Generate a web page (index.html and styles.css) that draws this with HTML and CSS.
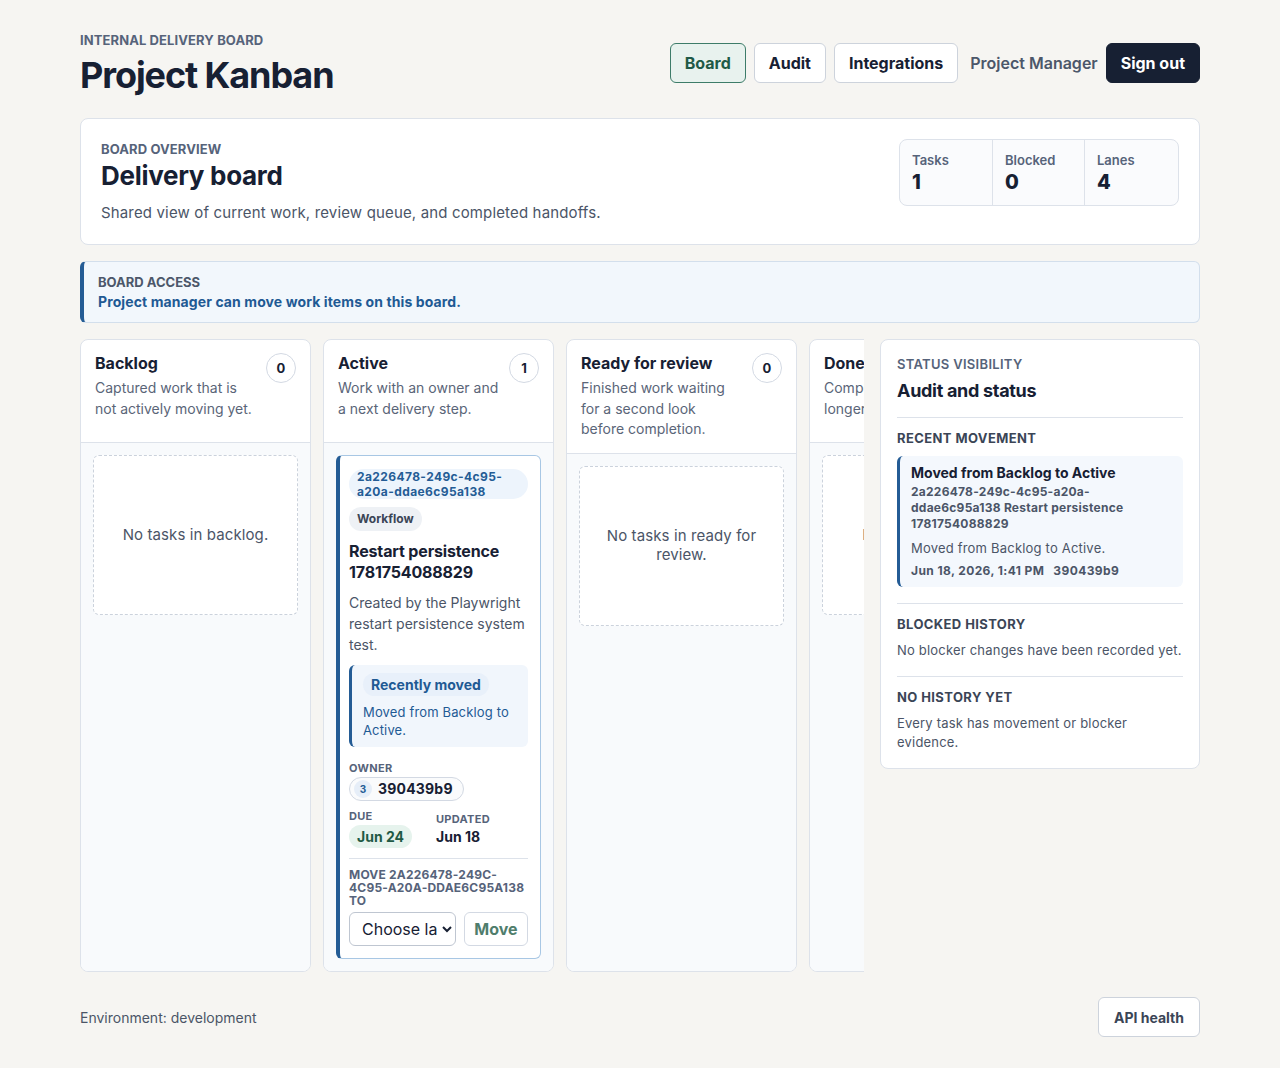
FILE: index.html
```html
<!DOCTYPE html>
<html lang="en">
<head>
<meta charset="utf-8">
<title>Project Kanban</title>
<link rel="stylesheet" href="styles.css">
</head>
<body>
<div class="page">
  <header class="topbar">
    <div class="brand">
      <div class="eyebrow">INTERNAL DELIVERY BOARD</div>
      <h1 class="title">Project Kanban</h1>
    </div>
    <nav class="nav">
      <button class="nav-btn active">Board</button>
      <button class="nav-btn">Audit</button>
      <button class="nav-btn">Integrations</button>
      <span class="role">Project Manager</span>
      <button class="nav-btn dark">Sign out</button>
    </nav>
  </header>

  <section class="overview card">
    <div class="overview-text">
      <div class="eyebrow small">BOARD OVERVIEW</div>
      <h2 class="ov-title">Delivery board</h2>
      <p class="ov-desc">Shared view of current work, review queue, and completed handoffs.</p>
    </div>
    <div class="stats">
      <div class="stat"><div class="stat-label">Tasks</div><div class="stat-value">1</div></div>
      <div class="stat"><div class="stat-label">Blocked</div><div class="stat-value">0</div></div>
      <div class="stat"><div class="stat-label">Lanes</div><div class="stat-value">4</div></div>
    </div>
  </section>

  <section class="access">
    <div class="access-label">BOARD ACCESS</div>
    <div class="access-text">Project manager can move work items on this board.</div>
  </section>

  <div class="workspace">
    <div class="board">
      <div class="lane">
        <div class="lane-head">
          <div class="lane-info">
            <h3 class="lane-title">Backlog</h3>
            <p class="lane-desc">Captured work that is not actively moving yet.</p>
          </div>
          <span class="count">0</span>
        </div>
        <div class="lane-body">
          <div class="empty">No tasks in backlog.</div>
        </div>
      </div>

      <div class="lane">
        <div class="lane-head">
          <div class="lane-info">
            <h3 class="lane-title">Active</h3>
            <p class="lane-desc">Work with an owner and a next delivery step.</p>
          </div>
          <span class="count">1</span>
        </div>
        <div class="lane-body">
          <article class="task">
            <div class="task-id">2a226478-249c-4c95-a20a-ddae6c95a138</div>
            <span class="tag">Workflow</span>
            <h4 class="task-title">Restart persistence 1781754088829</h4>
            <p class="task-desc">Created by the Playwright restart persistence system test.</p>
            <div class="moved">
              <span class="moved-pill">Recently moved</span>
              <p class="moved-text">Moved from Backlog to Active.</p>
            </div>
            <div class="meta-label owner-label">OWNER</div>
            <span class="owner"><span class="avatar">3</span>390439b9</span>
            <div class="dates">
              <div class="date-col">
                <div class="meta-label">DUE</div>
                <span class="due">Jun 24</span>
              </div>
              <div class="date-col">
                <div class="meta-label">UPDATED</div>
                <span class="updated">Jun 18</span>
              </div>
            </div>
            <div class="move">
              <label class="meta-label move-label" for="lane-select">Move 2a226478-249c-4c95-a20a-ddae6c95a138 to</label>
              <div class="move-row">
                <select id="lane-select" class="lane-select">
                  <option>Choose lane</option>
                  <option>Backlog</option>
                  <option>Ready for review</option>
                  <option>Done</option>
                </select>
                <button class="move-btn">Move</button>
              </div>
            </div>
          </article>
        </div>
      </div>

      <div class="lane">
        <div class="lane-head">
          <div class="lane-info">
            <h3 class="lane-title">Ready for review</h3>
            <p class="lane-desc">Finished work waiting for a second look before completion.</p>
          </div>
          <span class="count">0</span>
        </div>
        <div class="lane-body">
          <div class="empty">No tasks in ready for review.</div>
        </div>
      </div>

      <div class="lane">
        <div class="lane-head">
          <div class="lane-info">
            <h3 class="lane-title">Done</h3>
            <p class="lane-desc">Completed work that no longer needs attention.</p>
          </div>
          <span class="count">0</span>
        </div>
        <div class="lane-body">
          <div class="empty">No tasks in done.</div>
        </div>
      </div>
    </div>

    <aside class="side card">
      <div class="side-eyebrow">STATUS VISIBILITY</div>
      <h3 class="side-title">Audit and status</h3>
      <div class="side-section first">
        <div class="side-head">RECENT MOVEMENT</div>
        <div class="event">
          <div class="event-title">Moved from Backlog to Active</div>
          <div class="event-id">2a226478-249c-4c95-a20a-ddae6c95a138 Restart persistence 1781754088829</div>
          <p class="event-text">Moved from Backlog to Active.</p>
          <div class="event-meta"><span>Jun 18, 2026, 1:41 PM</span><span>390439b9</span></div>
        </div>
      </div>
      <div class="side-section">
        <div class="side-head">BLOCKED HISTORY</div>
        <p class="side-text">No blocker changes have been recorded yet.</p>
      </div>
      <div class="side-section">
        <div class="side-head">NO HISTORY YET</div>
        <p class="side-text">Every task has movement or blocker evidence.</p>
      </div>
    </aside>
  </div>

  <footer class="footer">
    <span class="env">Environment: development</span>
    <button class="nav-btn health">API health</button>
  </footer>
</div>
</body>
</html>
```
FILE: styles.css
```css
* { box-sizing: border-box; }
html, body { margin: 0; padding: 0; }
body {
  background: #f6f5f2;
  font-family: Inter, "Noto Sans", "Liberation Sans", sans-serif;
  color: #172033;
}
h1, h2, h3, h4, p { margin: 0; }
button, select { font-family: inherit; }

.page {
  width: 1120px;
  margin: 0 auto;
  padding-top: 32px;
}

.topbar {
  display: flex;
  justify-content: space-between;
  align-items: flex-start;
}
.eyebrow {
  font-size: 13px;
  line-height: 16px;
  font-weight: 700;
  letter-spacing: 0.1px;
  color: #56637a;
}
.title {
  margin-top: 5px;
  font-size: 36px;
  line-height: 44px;
  font-weight: 700;
  letter-spacing: -1.1px;
  color: #172033;
}
.nav {
  margin-top: 11px;
  display: flex;
  align-items: center;
  gap: 8px;
}
.nav-btn {
  height: 40px;
  padding: 0 14px;
  border: 1px solid #cdd3dc;
  border-radius: 6px;
  background: #fff;
  color: #172033;
  font-size: 16px;
  font-weight: 700;
}
.nav-btn.active {
  background: #e8f2ee;
  border-color: #3d7c69;
  color: #1f5a47;
}
.nav-btn.dark {
  background: #172033;
  border-color: #172033;
  color: #fff;
}
.role {
  margin-left: 4px;
  font-size: 16px;
  font-weight: 600;
  color: #4c576a;
}

.card {
  background: #fff;
  border: 1px solid #dde2ea;
  border-radius: 8px;
}

.overview {
  margin-top: 21px;
  padding: 20px;
  display: flex;
  justify-content: space-between;
  align-items: flex-start;
}
.eyebrow.small { line-height: 20px; }
.ov-title {
  margin-top: 1px;
  font-size: 26px;
  line-height: 32px;
  font-weight: 700;
  letter-spacing: -0.3px;
}
.ov-desc {
  margin-top: 9px;
  font-size: 15px;
  line-height: 23px;
  letter-spacing: 0.15px;
  color: #4b5567;
}
.stats {
  display: grid;
  grid-template-columns: 92px 92px 94px;
  border: 1px solid #dde2ea;
  border-radius: 8px;
  background: #fafbfd;
}
.stat {
  padding: 12px 12px 11px;
}
.stat + .stat { border-left: 1px solid #dde2ea; }
.stat-label {
  font-size: 13px;
  line-height: 16px;
  font-weight: 600;
  color: #56637a;
}
.stat-value {
  margin-top: 2px;
  font-size: 20px;
  line-height: 24px;
  font-weight: 800;
}

.access {
  margin-top: 16px;
  padding: 10px 16px 10px 14px;
  background: #f2f7fc;
  border: 1px solid #d3dfec;
  border-left: 4px solid #245c95;
  border-radius: 6px;
  line-height: 20px;
  font-weight: 700;
}
.access-label { font-size: 13px; color: #4c576a; }
.access-text { font-size: 14px; letter-spacing: 0.1px; color: #1f5a94; }

.workspace {
  margin-top: 16px;
  display: grid;
  grid-template-columns: minmax(0, 1fr) 320px;
  gap: 16px;
  align-items: start;
}
.board {
  display: flex;
  gap: 12px;
  overflow: hidden;
}
.lane {
  flex: 0 0 231px;
  display: flex;
  flex-direction: column;
  background: #fff;
  border: 1px solid #dde2ea;
  border-radius: 8px;
  overflow: hidden;
}
.lane-head {
  display: flex;
  justify-content: space-between;
  align-items: flex-start;
  gap: 10px;
  min-height: 103px;
  padding: 12px 14px 13px;
  border-bottom: 1px solid #dde2ea;
}
.lane-title {
  font-size: 16px;
  line-height: 22px;
  font-weight: 700;
}
.lane-desc {
  margin-top: 4px;
  font-size: 14px;
  line-height: 20.5px;
  color: #5a6578;
}
.count {
  flex: 0 0 30px;
  width: 30px;
  height: 30px;
  margin-top: 1px;
  border: 1px solid #d3d9e3;
  border-radius: 50%;
  display: flex;
  align-items: center;
  justify-content: center;
  font-size: 13px;
  font-weight: 700;
  color: #172033;
}
.lane-body {
  flex: 1;
  background: #f8fafc;
  padding: 12px;
}
.empty {
  height: 160px;
  padding: 16px;
  border: 1px dashed #cbd2dc;
  border-radius: 6px;
  background: #fff;
  display: flex;
  align-items: center;
  justify-content: center;
  text-align: center;
  font-size: 15px;
  line-height: 18.5px;
  letter-spacing: 0.1px;
  color: #4b5567;
}

.task {
  background: #fff;
  border: 1px solid #a8c7e4;
  border-left: 4px solid #245c95;
  border-radius: 6px;
  padding: 13px 12px 12px 9px;
  display: flex;
  flex-direction: column;
  align-items: flex-start;
}
.task-id {
  align-self: stretch;
  padding: 0 8px;
  background: #edf4fc;
  border-radius: 999px;
  font-size: 12px;
  line-height: 15px;
  font-weight: 700;
  letter-spacing: 0.4px;
  color: #245c95;
}
.tag {
  margin-top: 8px;
  padding: 4px 8px;
  background: #eef1f5;
  border-radius: 999px;
  font-size: 12px;
  line-height: 16px;
  font-weight: 700;
  color: #3b4556;
}
.task-title {
  margin-top: 10px;
  font-size: 16px;
  line-height: 21px;
  font-weight: 700;
  letter-spacing: -0.15px;
}
.task-desc {
  margin-top: 9px;
  font-size: 14px;
  line-height: 21px;
  color: #4b5567;
}
.moved {
  align-self: stretch;
  margin-top: 10px;
  padding: 8px 10px 8px 11px;
  background: #f1f6fc;
  border-left: 3px solid #245c95;
  border-radius: 6px;
}
.moved-pill {
  display: inline-block;
  padding: 2px 8px;
  background: #e8f0fa;
  border-radius: 999px;
  font-size: 14px;
  line-height: 19px;
  font-weight: 700;
  color: #1f5a94;
}
.moved-text {
  margin-top: 7px;
  font-size: 13px;
  line-height: 18px;
  letter-spacing: 0.15px;
  color: #1f5a94;
}
.meta-label {
  font-size: 11px;
  line-height: 14px;
  font-weight: 700;
  letter-spacing: 0.3px;
  color: #56637a;
  text-transform: uppercase;
}
.owner-label { margin-top: 14px; }
.owner {
  margin-top: 2px;
  display: inline-flex;
  align-items: center;
  gap: 6px;
  padding: 2px 10px 2px 4px;
  border: 1px solid #d3d9e3;
  border-radius: 999px;
  background: #fafbfc;
  font-size: 14px;
  line-height: 18px;
  font-weight: 700;
  letter-spacing: 0.2px;
}
.avatar {
  width: 18px;
  height: 18px;
  border-radius: 50%;
  background: #e6eef8;
  color: #245c95;
  font-size: 10px;
  font-weight: 700;
  display: flex;
  align-items: center;
  justify-content: center;
}
.dates {
  margin-top: 8px;
  display: flex;
  gap: 24px;
  align-items: flex-end;
}
.date-col {
  display: flex;
  flex-direction: column;
  align-items: flex-start;
  gap: 2px;
}
.due {
  padding: 3px 8px;
  background: #e6f3ed;
  border-radius: 999px;
  font-size: 14px;
  line-height: 17px;
  font-weight: 700;
  color: #1f5a45;
}
.updated {
  margin-bottom: 2px;
  font-size: 14px;
  line-height: 18px;
  font-weight: 700;
}
.move {
  align-self: stretch;
  margin-top: 10px;
  padding-top: 9px;
  border-top: 1px solid #dde2ea;
}
.move-label {
  display: block;
  font-size: 12px;
  line-height: 13px;
  letter-spacing: 0.2px;
}
.move-row {
  margin-top: 5px;
  display: flex;
  gap: 8px;
}
.lane-select {
  flex: 1;
  min-width: 0;
  height: 34px;
  padding: 0 2px 0 8px;
  border: 1px solid #bfc6d1;
  border-radius: 6px;
  background: #fff;
  font-size: 16px;
  color: #172033;
}
.move-btn {
  flex: 0 0 64px;
  height: 34px;
  border: 1px solid #d3d9e3;
  border-radius: 6px;
  background: #fff;
  font-size: 16px;
  font-weight: 700;
  color: #4f7d6c;
}

.side {
  padding: 14px 16px 16px;
}
.side-eyebrow {
  font-size: 13px;
  line-height: 20px;
  font-weight: 600;
  letter-spacing: 0.3px;
  color: #56637a;
}
.side-title {
  margin-top: 5px;
  font-size: 18px;
  line-height: 24px;
  font-weight: 700;
  letter-spacing: -0.3px;
}
.side-section {
  margin-top: 14px;
  padding-top: 10px;
  border-top: 1px solid #dde2ea;
}
.side-section + .side-section { margin-top: 16px; }
.side-head {
  font-size: 13px;
  line-height: 20px;
  font-weight: 700;
  letter-spacing: 0.4px;
  color: #3b4556;
}
.event {
  margin-top: 8px;
  padding: 8px 11px 8px;
  background: #f4f8fd;
  border-left: 3px solid #245c95;
  border-radius: 6px;
}
.event-title {
  font-size: 14px;
  line-height: 17px;
  font-weight: 700;
}
.event-id {
  margin-top: 3px;
  font-size: 12px;
  line-height: 16px;
  font-weight: 700;
  letter-spacing: 0.25px;
  color: #4b5567;
}
.event-text {
  margin-top: 7px;
  font-size: 13px;
  line-height: 18px;
  letter-spacing: 0.2px;
  color: #4b5567;
}
.event-meta {
  margin-top: 6px;
  display: flex;
  gap: 9px;
  font-size: 12px;
  line-height: 16px;
  font-weight: 700;
  letter-spacing: 0.4px;
  color: #4b5567;
}
.side-text {
  margin-top: 7px;
  font-size: 13px;
  line-height: 19px;
  letter-spacing: 0.2px;
  color: #4b5567;
}

.footer {
  margin-top: 25px;
  padding-bottom: 32px;
  display: flex;
  justify-content: space-between;
  align-items: center;
}
.env {
  font-size: 14px;
  color: #4b5567;
}
.nav-btn.health {
  padding: 0 15px;
  font-size: 14px;
  color: #3b4556;
}
```
